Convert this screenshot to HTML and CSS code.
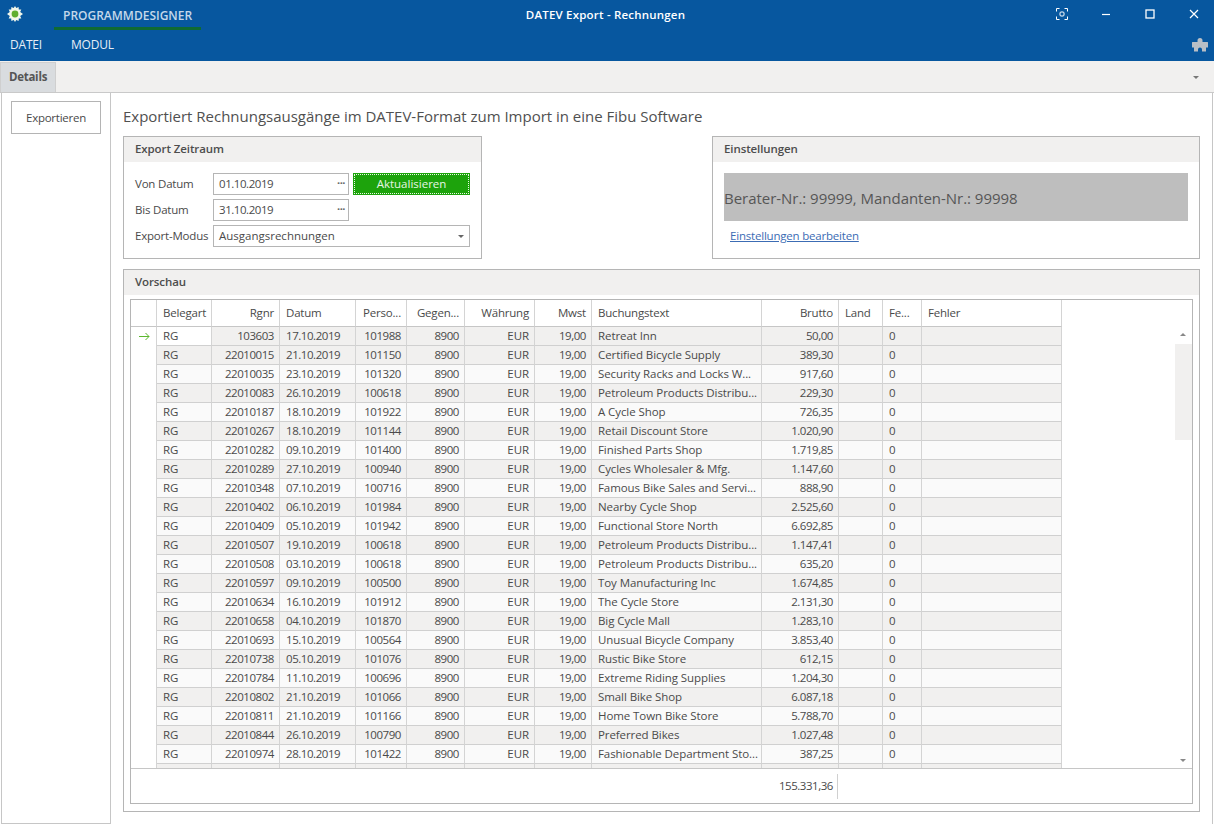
FILE: index.html
```html
<!DOCTYPE html>
<html lang="de">
<head>
<meta charset="utf-8">
<title>DATEV Export - Rechnungen</title>
<link rel="stylesheet" href="styles.css">
</head>
<body>
<div class="app">
  <header class="ribbon">
    <div class="titlebar">
      <svg class="logo" viewBox="0 0 16 16" width="16" height="16"><path fill="#f2f7ea" d="M8 0l1.3 2.100L11.600.9l.2 2.500 2.500.2-1.100 2.300L16 8l-2.800 2.100 1.100 2.300-2.500.2-.2 2.500-2.300-1.200L8 16l-1.300-2.100-2.300 1.200-.2-2.500-2.500-.2 1.100-2.300L0 8l2.800-2.100-1.100-2.300 2.500-.2.2-2.500 2.300 1.200z"/><circle cx="8" cy="8" r="3.400" fill="#5fae2e"/></svg>
      <div class="designer">PROGRAMMDESIGNER</div>
      <div class="wintitle">DATEV Export - Rechnungen</div>
      <div class="winctl">
        <svg class="fs" width="12" height="12" viewBox="0 0 12 12" fill="none" stroke="#fff"><path d="M.5 3.500v-3h3M8.500.5h3v3M11.500 8.500v3h-3M3.500 11.500h-3v-3"/><rect x="4" y="4" width="4" height="4" rx="1"/></svg>
        <svg width="10" height="10" viewBox="0 0 10 10" stroke="#fff" stroke-width="1.2"><path d="M1 5.500h8"/></svg>
        <svg width="10" height="10" viewBox="0 0 10 10" fill="none" stroke="#fff" stroke-width="1.3"><rect x="1" y="1" width="8" height="8"/></svg>
        <svg width="10" height="10" viewBox="0 0 10 10" stroke="#fff" stroke-width="1.2"><path d="M1 1l8 8M9 1l-8 8"/></svg>
      </div>
    </div>
    <div class="menubar">
      <span class="menu menu-datei">DATEI</span>
      <span class="menu">MODUL</span>
      <svg class="puzzle" width="16" height="14" viewBox="0 0 16 14"><path fill="#b9bfc6" d="M5.500 4V2.500a2.500 2.500 0 0 1 5 0V4H15.500a.5.5 0 0 1 .5.5V9.500H14v4H10V11.500a2 2 0 0 0-4 0V13.500H2v-4H0V4.500a.5.5 0 0 1 .5-.5z"/></svg>
    </div>
  </header>
  <div class="tabstrip">
    <div class="tab">Details</div>
    <span class="tabarrow"></span>
  </div>
  <div class="body">
    <aside class="side"><button class="sidebtn">Exportieren</button></aside>
    <main class="main">
      <h1 class="headline">Exportiert Rechnungsausgänge im DATEV-Format zum Import in eine Fibu Software</h1>
      <div class="toppanels">
        <section class="panel p-left">
          <div class="phead">Export Zeitraum</div>
          <div class="formgrid">
            <label>Von Datum</label>
            <div class="field fdate">01.10.2019<span class="dots">···</span></div>
            <div class="go"><span>Aktualisieren</span></div>
            <label>Bis Datum</label>
            <div class="field fdate">31.10.2019<span class="dots">···</span></div>
            <span></span>
            <label>Export-Modus</label>
            <div class="field fwide">Ausgangsrechnungen<span class="caret"></span></div>
          </div>
        </section>
        <section class="panel p-right">
          <div class="phead">Einstellungen</div>
          <div class="grey">Berater-Nr.: 99999, Mandanten-Nr.: 99998</div>
          <a class="link" href="#">Einstellungen bearbeiten</a>
        </section>
      </div>
      <section class="panel p-preview">
        <div class="phead">Vorschau</div>
        <div class="gridbox">
          <div class="gridscroll">
            <table class="grid">
              <colgroup><col class="c0"><col class="c1"><col class="c2"><col class="c3"><col class="c4"><col class="c5"><col class="c6"><col class="c7"><col class="c8"><col class="c9"><col class="c10"><col class="c11"><col class="c12"></colgroup>
              <thead><tr><th></th><th>Belegart</th><th class="r">Rgnr</th><th>Datum</th><th class="r">Perso...</th><th class="r">Gegen...</th><th class="r">Währung</th><th class="r">Mwst</th><th>Buchungstext</th><th class="r">Brutto</th><th>Land</th><th>Fe...</th><th>Fehler</th></tr></thead>
              <tbody>
<tr class="alt"><td class="ind"><svg width="11" height="9" viewBox="0 0 11 9" fill="none" stroke="#5cb82e"><path d="M0 4.500h10M6.500 1l3.500 3.500L6.500 8"/></svg></td><td class="focus">RG</td><td class="r n">103603</td><td class="n">17.10.2019</td><td class="r n">101988</td><td class="r n">8900</td><td class="r">EUR</td><td class="r n">19,00</td><td>Retreat Inn</td><td class="r n">50,00</td><td></td><td>0</td><td></td></tr>
<tr class="alt"><td class="ind"></td><td>RG</td><td class="r n">22010015</td><td class="n">21.10.2019</td><td class="r n">101150</td><td class="r n">8900</td><td class="r">EUR</td><td class="r n">19,00</td><td>Certified Bicycle Supply</td><td class="r n">389,30</td><td></td><td>0</td><td></td></tr>
<tr><td class="ind"></td><td>RG</td><td class="r n">22010035</td><td class="n">23.10.2019</td><td class="r n">101320</td><td class="r n">8900</td><td class="r">EUR</td><td class="r n">19,00</td><td>Security Racks and Locks W...</td><td class="r n">917,60</td><td></td><td>0</td><td></td></tr>
<tr class="alt"><td class="ind"></td><td>RG</td><td class="r n">22010083</td><td class="n">26.10.2019</td><td class="r n">100618</td><td class="r n">8900</td><td class="r">EUR</td><td class="r n">19,00</td><td>Petroleum Products Distribu...</td><td class="r n">229,30</td><td></td><td>0</td><td></td></tr>
<tr><td class="ind"></td><td>RG</td><td class="r n">22010187</td><td class="n">18.10.2019</td><td class="r n">101922</td><td class="r n">8900</td><td class="r">EUR</td><td class="r n">19,00</td><td>A Cycle Shop</td><td class="r n">726,35</td><td></td><td>0</td><td></td></tr>
<tr class="alt"><td class="ind"></td><td>RG</td><td class="r n">22010267</td><td class="n">18.10.2019</td><td class="r n">101144</td><td class="r n">8900</td><td class="r">EUR</td><td class="r n">19,00</td><td>Retail Discount Store</td><td class="r n">1.020,90</td><td></td><td>0</td><td></td></tr>
<tr><td class="ind"></td><td>RG</td><td class="r n">22010282</td><td class="n">09.10.2019</td><td class="r n">101400</td><td class="r n">8900</td><td class="r">EUR</td><td class="r n">19,00</td><td>Finished Parts Shop</td><td class="r n">1.719,85</td><td></td><td>0</td><td></td></tr>
<tr class="alt"><td class="ind"></td><td>RG</td><td class="r n">22010289</td><td class="n">27.10.2019</td><td class="r n">100940</td><td class="r n">8900</td><td class="r">EUR</td><td class="r n">19,00</td><td>Cycles Wholesaler &amp; Mfg.</td><td class="r n">1.147,60</td><td></td><td>0</td><td></td></tr>
<tr><td class="ind"></td><td>RG</td><td class="r n">22010348</td><td class="n">07.10.2019</td><td class="r n">100716</td><td class="r n">8900</td><td class="r">EUR</td><td class="r n">19,00</td><td>Famous Bike Sales and Servi...</td><td class="r n">888,90</td><td></td><td>0</td><td></td></tr>
<tr class="alt"><td class="ind"></td><td>RG</td><td class="r n">22010402</td><td class="n">06.10.2019</td><td class="r n">101984</td><td class="r n">8900</td><td class="r">EUR</td><td class="r n">19,00</td><td>Nearby Cycle Shop</td><td class="r n">2.525,60</td><td></td><td>0</td><td></td></tr>
<tr><td class="ind"></td><td>RG</td><td class="r n">22010409</td><td class="n">05.10.2019</td><td class="r n">101942</td><td class="r n">8900</td><td class="r">EUR</td><td class="r n">19,00</td><td>Functional Store North</td><td class="r n">6.692,85</td><td></td><td>0</td><td></td></tr>
<tr class="alt"><td class="ind"></td><td>RG</td><td class="r n">22010507</td><td class="n">19.10.2019</td><td class="r n">100618</td><td class="r n">8900</td><td class="r">EUR</td><td class="r n">19,00</td><td>Petroleum Products Distribu...</td><td class="r n">1.147,41</td><td></td><td>0</td><td></td></tr>
<tr><td class="ind"></td><td>RG</td><td class="r n">22010508</td><td class="n">03.10.2019</td><td class="r n">100618</td><td class="r n">8900</td><td class="r">EUR</td><td class="r n">19,00</td><td>Petroleum Products Distribu...</td><td class="r n">635,20</td><td></td><td>0</td><td></td></tr>
<tr class="alt"><td class="ind"></td><td>RG</td><td class="r n">22010597</td><td class="n">09.10.2019</td><td class="r n">100500</td><td class="r n">8900</td><td class="r">EUR</td><td class="r n">19,00</td><td>Toy Manufacturing Inc</td><td class="r n">1.674,85</td><td></td><td>0</td><td></td></tr>
<tr><td class="ind"></td><td>RG</td><td class="r n">22010634</td><td class="n">16.10.2019</td><td class="r n">101912</td><td class="r n">8900</td><td class="r">EUR</td><td class="r n">19,00</td><td>The Cycle Store</td><td class="r n">2.131,30</td><td></td><td>0</td><td></td></tr>
<tr class="alt"><td class="ind"></td><td>RG</td><td class="r n">22010658</td><td class="n">04.10.2019</td><td class="r n">101870</td><td class="r n">8900</td><td class="r">EUR</td><td class="r n">19,00</td><td>Big Cycle Mall</td><td class="r n">1.283,10</td><td></td><td>0</td><td></td></tr>
<tr><td class="ind"></td><td>RG</td><td class="r n">22010693</td><td class="n">15.10.2019</td><td class="r n">100564</td><td class="r n">8900</td><td class="r">EUR</td><td class="r n">19,00</td><td>Unusual Bicycle Company</td><td class="r n">3.853,40</td><td></td><td>0</td><td></td></tr>
<tr class="alt"><td class="ind"></td><td>RG</td><td class="r n">22010738</td><td class="n">05.10.2019</td><td class="r n">101076</td><td class="r n">8900</td><td class="r">EUR</td><td class="r n">19,00</td><td>Rustic Bike Store</td><td class="r n">612,15</td><td></td><td>0</td><td></td></tr>
<tr><td class="ind"></td><td>RG</td><td class="r n">22010784</td><td class="n">11.10.2019</td><td class="r n">100696</td><td class="r n">8900</td><td class="r">EUR</td><td class="r n">19,00</td><td>Extreme Riding Supplies</td><td class="r n">1.204,30</td><td></td><td>0</td><td></td></tr>
<tr class="alt"><td class="ind"></td><td>RG</td><td class="r n">22010802</td><td class="n">21.10.2019</td><td class="r n">101066</td><td class="r n">8900</td><td class="r">EUR</td><td class="r n">19,00</td><td>Small Bike Shop</td><td class="r n">6.087,18</td><td></td><td>0</td><td></td></tr>
<tr><td class="ind"></td><td>RG</td><td class="r n">22010811</td><td class="n">21.10.2019</td><td class="r n">101166</td><td class="r n">8900</td><td class="r">EUR</td><td class="r n">19,00</td><td>Home Town Bike Store</td><td class="r n">5.788,70</td><td></td><td>0</td><td></td></tr>
<tr class="alt"><td class="ind"></td><td>RG</td><td class="r n">22010844</td><td class="n">26.10.2019</td><td class="r n">100790</td><td class="r n">8900</td><td class="r">EUR</td><td class="r n">19,00</td><td>Preferred Bikes</td><td class="r n">1.027,48</td><td></td><td>0</td><td></td></tr>
<tr><td class="ind"></td><td>RG</td><td class="r n">22010974</td><td class="n">28.10.2019</td><td class="r n">101422</td><td class="r n">8900</td><td class="r">EUR</td><td class="r n">19,00</td><td>Fashionable Department Sto...</td><td class="r n">387,25</td><td></td><td>0</td><td></td></tr>
<tr class="alt"><td class="ind"></td><td></td><td></td><td></td><td></td><td></td><td></td><td></td><td></td><td></td><td></td><td></td><td></td></tr>
              </tbody>
            </table>
            <div class="vscroll"><span class="up"></span><span class="thumb"></span><span class="down"></span></div>
          </div>
          <div class="gridfoot"><span class="total">155.331,36</span></div>
        </div>
      </section>
    </main>
  </div>
</div>
</body>
</html>
```
FILE: styles.css
```css
* { box-sizing: border-box; }
html, body { margin: 0; height: 100%; }
body { font-family: "Open Sans", "Noto Sans", "Liberation Sans", sans-serif; font-size: 11.5px; color: #4a4a4a; background: #fff; overflow: hidden; }
.app { width: 1214px; height: 824px; display: flex; flex-direction: column; }
.ribbon { height: 61px; background: #07579f; color: #fff; flex: none; }
.titlebar { height: 30px; display: flex; align-items: flex-start; position: relative; }
.logo { margin: 6px 0 0 7px; flex: none; }
.designer { margin-left: 31px; width: 147px; height: 30px; padding: 7px 0 0 9px; font-size: 12px; font-weight: 600; color: #c4d8ea; border-bottom: 3px solid #0f6a33; white-space: nowrap; flex: none; }
.wintitle { position: absolute; left: 0; right: 3px; top: 7px; text-align: center; font-weight: 600; font-size: 11.5px; letter-spacing: .2px; pointer-events: none; }
.winctl { position: absolute; right: 0; top: 0; height: 30px; display: flex; align-items: center; gap: 34px; padding: 0 15px 2px 0; }
.fs { margin-right: -1px; }
.menubar { height: 31px; display: flex; align-items: center; padding: 0 6px 3px 10px; }
.menu { font-size: 12px; color: #e6eef6; letter-spacing: -.2px; }
.menu-datei { margin-right: 29px; }
.puzzle { margin-left: auto; margin-top: 1px; }
.tabstrip { height: 32px; background: #f1f0ef; border-bottom: 1px solid #c9c9c9; display: flex; align-items: flex-end; flex: none; position: relative; }
.tab { width: 56px; height: 30px; background: #d9dcdf; border: 1px solid #cfcfcf; border-bottom: 0; font-weight: 700; color: #555; text-align: center; line-height: 27px; letter-spacing: -.25px; }
.tabarrow { position: absolute; right: 15px; top: 15px; border: 3px solid transparent; border-top-color: #777; border-bottom: 0; }
.body { flex: 1; display: flex; min-height: 0; }
.side { width: 110px; margin-left: 1px; border: 1px solid #c6c6c6; border-top: 0; padding: 8px 9px 0; flex: none; }
.sidebtn { width: 90px; height: 33px; background: #fff; border: 1px solid #b4b4b4; font: inherit; color: #4a4a4a; padding: 0; letter-spacing: -.25px; }
.main { flex: 1; min-width: 0; margin-right: 1px; padding: 0 12px; border-right: 1px solid #c6c6c6; }
.headline { margin: 0; height: 43px; padding-top: 12px; font-size: 15px; line-height: 22px; font-weight: 400; color: #505050; letter-spacing: -.01px; white-space: nowrap; }
.toppanels { display: flex; justify-content: space-between; height: 123px; margin-bottom: 10px; }
.panel { border: 1px solid #b5b5b5; background: #fff; }
.phead { height: 25px; background: #f1f0ef; font-weight: 600; padding-left: 11px; line-height: 24px; color: #4d4d4d; letter-spacing: -.1px; }
.p-left { width: 359px; }
.p-right { width: 488px; }
.formgrid { display: grid; grid-template-columns: 74px 136px 117px; column-gap: 4px; row-gap: 4px; grid-auto-rows: 22px; padding: 11px 0 0 11px; align-items: center; }
.formgrid label { white-space: nowrap; letter-spacing: -.2px; padding-bottom: 2px; }
.field { height: 22px; border: 1px solid #b5b5b5; line-height: 20px; padding-left: 5px; position: relative; }
.fdate { letter-spacing: -.45px; }
.fwide { grid-column: 2 / 4; letter-spacing: 0; }
.dots { position: absolute; right: 3px; top: -1px; font-size: 11px; font-weight: 700; color: #666; letter-spacing: -.5px; }
.caret { position: absolute; right: 5px; top: 9px; border: 3px solid transparent; border-top-color: #666; border-bottom: 0; }
.go { height: 22px; background: #1da30c; padding: 1px; color: #e8f5e4; text-align: center; line-height: 18px; }
.go span { display: block; height: 20px; border: 1px dotted #eaf6e6; }
.grey { margin: 11px 11px 0; height: 48px; background: #bebebe; font-size: 15px; line-height: 51px; color: #565656; letter-spacing: -.03px; white-space: nowrap; }
.link { display: block; margin: 7px 0 0 17px; color: #3c6cb4; text-decoration: underline; letter-spacing: -.2px; }
.p-preview { height: 543px; }
.gridbox { margin: 4px 6px 0 6px; height: 505px; border: 1px solid #b5b5b5; }
.gridscroll { height: 469px; overflow: hidden; position: relative; border-bottom: 1px solid #c6c6c6; }
.grid { table-layout: fixed; border-collapse: separate; border-spacing: 0; width: 931px; }
.c0 { width: 26px; } .c1 { width: 55px; } .c2 { width: 68px; } .c3 { width: 76px; } .c4 { width: 51px; } .c5 { width: 58px; } .c6 { width: 70px; } .c7 { width: 57px; } .c8 { width: 170px; } .c9 { width: 77px; } .c10 { width: 44px; } .c11 { width: 39px; } .c12 { width: 140px; }
.grid th { height: 27px; font-weight: 400; text-align: left; padding: 0 5px 2px 6px; border-right: 1px solid #d4d4d4; border-bottom: 1px solid #c6c6c6; letter-spacing: -.2px; white-space: nowrap; overflow: hidden; }
.grid td { height: 19px; padding: 0 5px 0 6px; border-right: 1px solid #d4d4d4; border-bottom: 1px solid #d0d0d0; background: #fafafa; white-space: nowrap; overflow: hidden; letter-spacing: -.08px; line-height: 18px; }
.grid .alt td { background: #f1f0ef; }
.grid .r { text-align: right; }
.grid td.n { letter-spacing: -.45px; }
.grid td.ind { background: #fff; border-right: 1px solid #d4d4d4; border-bottom: 0; padding: 0 0 0 8px; }
.grid td.focus { background: #fff; }
.vscroll { position: absolute; top: 27px; right: 0; width: 18px; bottom: 0; }
.thumb { position: absolute; top: 17px; left: 1px; right: 0; height: 96px; background: #f1f0ef; }
.up { position: absolute; top: 6px; left: 6px; border: 3.5px solid transparent; border-bottom-color: #888; border-top: 0; }
.down { position: absolute; bottom: 6px; left: 6px; border: 3.5px solid transparent; border-top-color: #888; border-bottom: 0; }
.gridfoot { height: 34px; padding-left: 25px; display: flex; align-items: center; }
.gridfoot .total { margin-left: 580px; width: 102px; height: 25px; line-height: 23px; text-align: right; padding-right: 4px; border-right: 1px solid #d0d0d0; letter-spacing: -.45px; }
```
